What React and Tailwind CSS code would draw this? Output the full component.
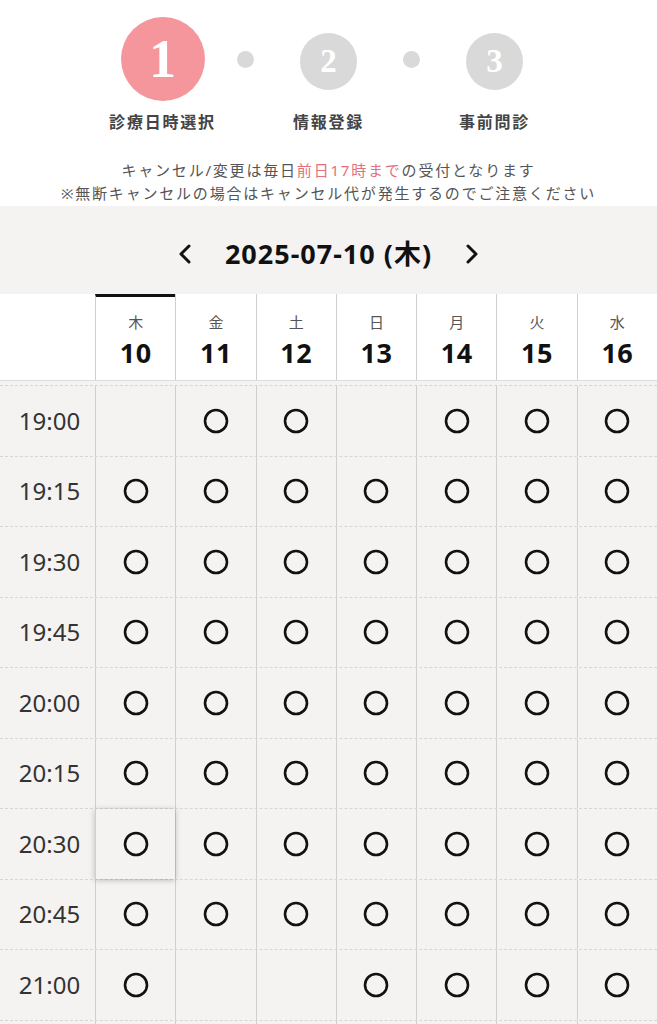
import React from 'react';

const days = [
  { w: '木', d: 10 },
  { w: '金', d: 11 },
  { w: '土', d: 12 },
  { w: '日', d: 13 },
  { w: '月', d: 14 },
  { w: '火', d: 15 },
  { w: '水', d: 16 },
];

const ALL = [1, 1, 1, 1, 1, 1, 1];

const slots = [
  { t: '19:00', a: [0, 1, 1, 0, 1, 1, 1] },
  { t: '19:15', a: ALL },
  { t: '19:30', a: ALL },
  { t: '19:45', a: ALL },
  { t: '20:00', a: ALL },
  { t: '20:15', a: ALL },
  { t: '20:30', a: ALL },
  { t: '20:45', a: ALL },
  { t: '21:00', a: [1, 0, 0, 1, 1, 1, 1] },
];

const font = { fontFamily: '"Noto Sans", "Noto Sans CJK JP", sans-serif' };

const Step = ({ n, label, active }) => (
  <div className="w-[149px] flex flex-col items-center">
    <div className="h-[84px] flex items-center justify-center">
      <div
        className={
          active
            ? 'w-[84px] h-[84px] rounded-full bg-[#f5969c] flex items-center justify-center'
            : 'w-[57px] h-[57px] rounded-full bg-[#d9d9d9] flex items-center justify-center mt-[4px]'
        }
      >
        <span
          className={active ? 'text-white text-[54px] font-bold leading-none' : 'text-white text-[33px] font-bold leading-none'}
          style={{ fontFamily: '"Liberation Serif", "DejaVu Serif", serif' }}
        >
          {n}
        </span>
      </div>
    </div>
    <div className="mt-[9px] text-[16px] font-bold text-[#444] tracking-[1.8px] whitespace-nowrap">{label}</div>
  </div>
);

const Dot = () => (
  <div className="w-[17px] h-[84px] flex items-center">
    <div className="w-[17px] h-[17px] rounded-full bg-[#d9d9d9]" />
  </div>
);

const Mark = () => (
  <svg width="26" height="26" viewBox="0 0 26 26">
    <circle cx="13" cy="13" r="11" fill="none" stroke="#111" strokeWidth="2.6" />
  </svg>
);

export default function App() {
  return (
    <div className="w-[657px] h-[1024px] overflow-hidden bg-white" style={font}>
      {/* ステップ */}
      <div className="pt-[17px] flex justify-center">
        <Step n="1" label="診療日時選択" active />
        <Dot />
        <Step n="2" label="情報登録" />
        <Dot />
        <Step n="3" label="事前問診" />
      </div>

      <div className="mt-[25px] text-center text-[15px] leading-[23px] text-[#555] tracking-[1.8px] whitespace-nowrap">
        <p>
          キャンセル/変更は毎日<span className="text-[#e4707a]">前日17時まで</span>の受付となります
        </p>
        <p>※無断キャンセルの場合はキャンセル代が発生するのでご注意ください</p>
      </div>

      <div className="mt-[1px] bg-[#f4f3f1]">
        {/* 日付ナビ */}
        <div className="h-[88px] pt-[8px] flex items-center justify-center gap-[32px]">
          <svg width="16" height="22" viewBox="0 0 16 22">
            <path d="M12 3 L4 11 L12 19" fill="none" stroke="#111" strokeWidth="3" strokeLinecap="round" strokeLinejoin="round" />
          </svg>
          <span className="text-[27px] font-bold text-[#111] tracking-[1px]">2025-07-10 (木)</span>
          <svg width="16" height="22" viewBox="0 0 16 22">
            <path d="M4 3 L12 11 L4 19" fill="none" stroke="#111" strokeWidth="3" strokeLinecap="round" strokeLinejoin="round" />
          </svg>
        </div>

        {/* ヘッダー */}
        <div className="grid grid-cols-[95px_repeat(7,1fr)] bg-white h-[87px] border-b border-[#dcdcdc]">
          <div />
          {days.map((day, i) => (
            <div
              key={day.d}
              className={
                'border-l border-[#cfcfcf] flex flex-col items-center ' +
                (i === 0 ? 'border-t-[3px] border-t-[#111] pt-[15px]' : 'pt-[18px]')
              }
            >
              <span className="text-[15px] leading-[20px] text-[#555]">{day.w}</span>
              <span className="text-[27px] leading-[32px] font-bold text-[#111] mt-[5px] tracking-[0.5px]">{day.d}</span>
            </div>
          ))}
        </div>

        {/* 時間枠 */}
        <div className="pt-[4px]">
          {slots.map((s, r) => (
            <div
              key={s.t}
              className="grid grid-cols-[95px_repeat(7,1fr)] h-[70.5px] border-t border-dashed border-[#d6d6d6]"
            >
              <div className="flex items-center justify-center pl-[4px] text-[24px] text-[#333]">{s.t}</div>
              {s.a.map((ok, c) => (
                <div
                  key={c}
                  className={
                    'border-l border-[#cfcfcf] flex items-center justify-center ' +
                    (r === 6 && c === 0 ? 'shadow-[0_1px_6px_rgba(0,0,0,0.25)] relative' : '')
                  }
                >
                  {ok ? <Mark /> : null}
                </div>
              ))}
            </div>
          ))}
          <div className="grid grid-cols-[95px_repeat(7,1fr)] h-[70.5px] border-t border-dashed border-[#d6d6d6]">
            <div />
            {days.map((day) => (
              <div key={day.d} className="border-l border-[#cfcfcf]" />
            ))}
          </div>
        </div>
      </div>
    </div>
  );
}
